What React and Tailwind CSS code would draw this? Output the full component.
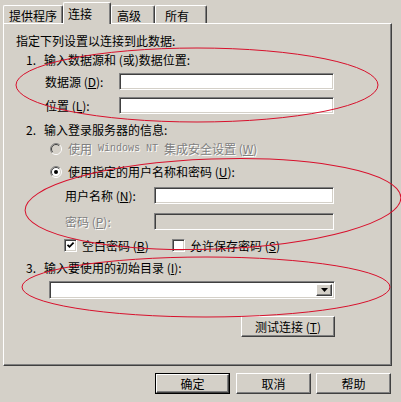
const sunken =
  "border border-t-[#808080] border-l-[#808080] border-b-white border-r-white shadow-[inset_1px_1px_0_#404040,inset_-1px_-1px_0_#d4d0c8]";
const raised =
  "border border-t-white border-l-white border-b-[#404040] border-r-[#404040] shadow-[inset_-1px_-1px_0_#808080]";
const grayText = "text-[#808080] [text-shadow:1px_1px_0_#fff]";

function Radio({ checked, disabled }) {
  return (
    <svg width="12" height="12" viewBox="0 0 12 12" className="shrink-0">
      <circle cx="6" cy="6" r="5" fill={disabled ? "#d4d0c8" : "#fff"} />
      <path d="M9.9 2.1 A5.5 5.5 0 0 0 2.1 9.9" fill="none" stroke="#808080" strokeWidth="1" />
      <path d="M2.1 9.9 A5.5 5.5 0 0 0 9.9 2.1" fill="none" stroke="#fff" strokeWidth="1" />
      <path d="M9.2 2.8 A4.5 4.5 0 0 0 2.8 9.2" fill="none" stroke="#404040" strokeWidth="1" />
      <path d="M2.8 9.2 A4.5 4.5 0 0 0 9.2 2.8" fill="none" stroke="#d4d0c8" strokeWidth="1" />
      {checked && <circle cx="6" cy="6" r="2" fill="#000" />}
    </svg>
  );
}

function Check({ checked }) {
  return (
    <div className={`w-[13px] h-[13px] bg-white shrink-0 flex items-center justify-center ${sunken}`}>
      {checked && (
        <svg width="9" height="9" viewBox="0 0 9 9">
          <path d="M1.5 3.8 L3.5 5.8 L7.6 1.7" fill="none" stroke="#000" strokeWidth="1.8" />
        </svg>
      )}
    </div>
  );
}

function Field({ className = "", disabled }) {
  return <div className={`${disabled ? "bg-[#d4d0c8]" : "bg-white"} ${sunken} ${className}`} />;
}

function Tab({ children, className = "", selected }) {
  if (selected) {
    return (
      <div
        className={`relative z-10 h-[22px] -mb-px bg-[#d4d0c8] flex items-start pt-[3px] border-t border-l border-r border-t-white border-l-white border-r-[#404040] shadow-[inset_-1px_0_0_#808080] rounded-t-[2px] ${className}`}
      >
        {children}
      </div>
    );
  }
  return (
    <div
      className={`h-[18px] flex items-start pt-[2px] border-t border-l border-r border-t-white border-l-white border-r-[#404040] shadow-[inset_-1px_0_0_#808080] rounded-t-[2px] ${className}`}
    >
      {children}
    </div>
  );
}

function Button({ children, className = "", isDefault }) {
  if (isDefault) {
    return (
      <div className={`h-[21px] border border-black flex ${className}`}>
        <div className={`flex-1 flex items-center justify-center ${raised}`}>{children}</div>
      </div>
    );
  }
  return (
    <div className={`h-[21px] flex items-center justify-center ${raised} ${className}`}>{children}</div>
  );
}

export default function App() {
  return (
    <div className="relative w-[401px] h-[402px] overflow-hidden bg-[#d4d0c8] text-black text-[12px] leading-[16px] font-['Noto_Sans_CJK_SC','Noto_Sans',sans-serif]">
      {/* tabs */}
      <div className="flex items-end h-[23px] pl-[3px]">
        <Tab className="w-[60px] pl-[5px]">提供程序</Tab>
        <Tab selected className="w-[48px] pl-[4px]">连接</Tab>
        <Tab className="w-[44px] pl-[5px]">高级</Tab>
        <Tab className="w-[52px] pl-[9px]">所有</Tab>
      </div>

      {/* panel */}
      <div className="ml-[3px] w-[389px] h-[343px] border border-t-white border-l-white border-r-[#404040] border-b-[#404040] shadow-[inset_-1px_-1px_0_#808080]">
        <div className="flex flex-col pt-[9px]">
          <div className="h-[16px] flex items-center pl-[12px]">指定下列设置以连接到此数据:</div>

          <div className="mt-[3px] h-[16px] flex items-center pl-[22px] whitespace-pre">
            <span className="w-[18px]">1.</span>输入数据源和 (或)数据位置:
          </div>
          <div className="mt-[5px] h-[17px] flex items-center pl-[41px]">
            <span className="w-[74px] whitespace-pre">数据源 (<u>D</u>):</span>
            <Field className="w-[215px] h-[17px]" />
          </div>
          <div className="mt-[7px] h-[17px] flex items-center pl-[41px]">
            <span className="w-[74px] whitespace-pre">位置 (<u>L</u>):</span>
            <Field className="w-[215px] h-[17px]" />
          </div>

          <div className="mt-[8px] h-[16px] flex items-center pl-[22px]">
            <span className="w-[18px]">2.</span>输入登录服务器的信息:
          </div>
          <div className="mt-[4px] h-[14px] flex items-center pl-[46px]">
            <Radio disabled />
            <span className={`ml-[6px] flex items-center whitespace-pre ${grayText}`}>
              使用
              <span className="mx-[6px] font-['Liberation_Mono',monospace] text-[10px]">Windows NT</span>
              集成安全设置 (<u>W</u>)
            </span>
          </div>
          <div className="mt-[9px] h-[14px] flex items-center pl-[46px]">
            <Radio checked />
            <span className="ml-[6px] whitespace-pre">使用指定的用户名称和密码 (<u>U</u>):</span>
          </div>
          <div className="mt-[8px] h-[17px] flex items-center pl-[61px]">
            <span className="w-[89px] whitespace-pre">用户名称 (<u>N</u>):</span>
            <Field className="w-[180px] h-[17px]" />
          </div>
          <div className="mt-[9px] h-[17px] flex items-center pl-[61px]">
            <span className={`w-[89px] whitespace-pre ${grayText}`}>密码 (<u>P</u>):</span>
            <Field disabled className="w-[180px] h-[17px]" />
          </div>
          <div className="mt-[9px] h-[13px] flex items-center pl-[60px]">
            <div className="w-[108px] flex items-center">
              <Check checked />
              <span className="ml-[5px] whitespace-pre">空白密码 (<u>B</u>)</span>
            </div>
            <Check />
            <span className="ml-[5px] whitespace-pre">允许保存密码 (<u>S</u>)</span>
          </div>

          <div className="mt-[8px] h-[16px] flex items-center pl-[22px] whitespace-pre">
            <span className="w-[18px]">3.</span>输入要使用的初始目录 (<u>I</u>):
          </div>
          <div className="mt-[5px] h-[18px] flex items-center pl-[45px]">
            <div className={`w-[286px] h-[18px] bg-white flex justify-end p-[2px] ${sunken}`}>
              <div className={`w-[16px] h-full bg-[#d4d0c8] flex items-center justify-center ${raised}`}>
                <svg width="7" height="4" viewBox="0 0 7 4">
                  <path d="M0 0 H7 L3.5 4 Z" fill="#000" />
                </svg>
              </div>
            </div>
          </div>

          <div className="mt-[17px] flex pl-[237px]">
            <Button className="w-[94px] whitespace-pre">测试连接 (<u>T</u>)</Button>
          </div>
        </div>
      </div>

      {/* dialog buttons */}
      <div className="mt-[7px] flex justify-end pr-[10px]">
        <Button isDefault className="w-[75px]">确定</Button>
        <Button className="w-[75px] ml-[6px]">取消</Button>
        <Button className="w-[75px] ml-[5px]">帮助</Button>
      </div>

      {/* red annotation ellipses */}
      <svg className="absolute inset-0 pointer-events-none" width="401" height="402" viewBox="0 0 401 402">
        <g fill="none" stroke="#d8102c" strokeWidth="1">
          <ellipse cx="197" cy="85" rx="181" ry="37" />
          <ellipse cx="213" cy="204" rx="188" ry="45" transform="rotate(-2 213 204)" />
          <ellipse cx="206" cy="287" rx="184" ry="30" />
        </g>
      </svg>
    </div>
  );
}
